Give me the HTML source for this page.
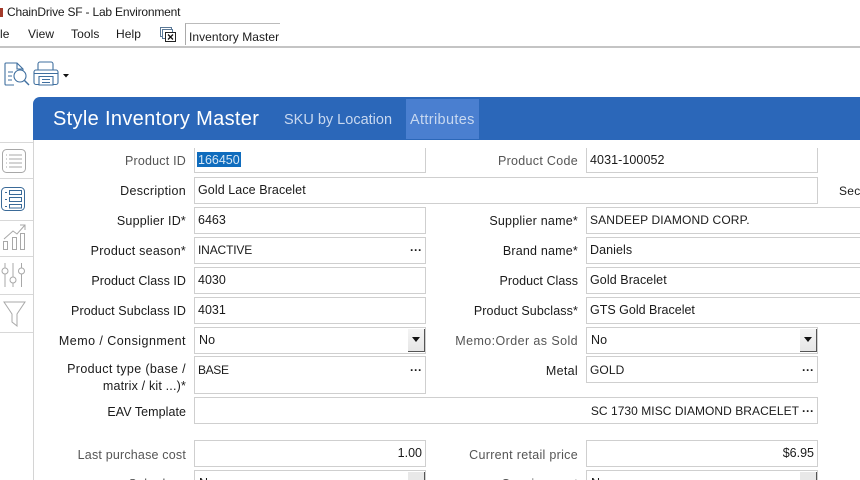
<!DOCTYPE html>
<html><head><meta charset="utf-8"><style>
html,body{margin:0;padding:0;background:#fff}
#r{position:relative;width:860px;height:480px;overflow:hidden;background:#fff;font-family:"Liberation Sans",sans-serif;font-size:12.5px;letter-spacing:.3px;color:#1a1a1a}
#r div{position:absolute;box-sizing:border-box}
.l{right:674px;text-align:right;white-space:nowrap;line-height:16px}
.l2{right:282px;text-align:right;white-space:nowrap;line-height:16px}
.g{color:#555}
.b{border:1px solid #cfcfcf;background:#fff;height:27px}
.t{white-space:nowrap;line-height:16px;letter-spacing:.08px}
.n{letter-spacing:0}
.k{font-size:12px}
.c1{left:194px;width:232px}.c2{left:586px;width:232px}.c3{left:586px;width:290px}
.d{font-weight:bold;letter-spacing:0;font-size:12px}
.m{white-space:nowrap;line-height:16px;font-size:12px;letter-spacing:.1px}
</style></head><body><div id="r">
<div style="left:0;top:8px;width:3px;height:9px;background:#a33a2a"></div>
<div class="m" style="left:7px;top:4px;font-size:12px;letter-spacing:-.2px">ChainDrive SF - Lab Environment</div>
<div class="m" style="left:0;top:26px">le</div>
<div class="m" style="left:28px;top:26px">View</div>
<div class="m" style="left:71px;top:26px">Tools</div>
<div class="m" style="left:116px;top:26px">Help</div>
<svg style="position:absolute;left:159px;top:26px" width="18" height="17" fill="#fff"><rect x="1.5" y="1.5" width="11" height="9" stroke="#5a7896"/><rect x="3.5" y="3.5" width="10" height="9" stroke="#5a7896"/><rect x="6.5" y="6.5" width="10" height="9" stroke="#222"/><path d="M9 8.5l5 5M14 8.5l-5 5" stroke="#111" stroke-width="1.3"/></svg>
<div style="left:185px;top:23px;width:95px;height:22px;border-left:1px solid #aaa;border-top:1px solid #bbb"></div>
<div class="m" style="left:189px;top:29px;letter-spacing:.05px">Inventory Master</div>
<div style="left:0;top:46px;width:860px;height:2px;background:#c4c4c4"></div>
<svg style="position:absolute;left:0;top:58px" width="72" height="30" fill="none" stroke="#3f6f9f" stroke-width="1.1"><path d="M14 27H6a1 1 0 0 1-1-1V6a1 1 0 0 1 1-1h11l6 6v2"/><path d="M17 5v6h6M8 14h5M8 18h4M8 22h4"/><circle cx="20" cy="18" r="6"/><path d="M24.500 22.500L29 27" stroke-width="1.4"/><path d="M38 12V6a2 2 0 0 1 2-2h11a2 2 0 0 1 2 2v6M39 26.500h-3a2 2 0 0 1-2-2V14a2 2 0 0 1 2-2h20a2 2 0 0 1 2 2v10.500a2 2 0 0 1-2 2h-3M39 18.500h14v8.500H39zM42 21.500h8M42 24.500h8M34 15.500h24"/><path d="M63 16h6l-3 3.500z" fill="#111" stroke="none"/></svg>
<div style="left:33px;top:97px;width:840px;height:43px;background:#2b67b9;border-radius:7px 0 0 0"></div>
<div style="left:406px;top:99px;width:73px;height:40px;background:#4a7fd0"></div>
<div style="left:53px;top:106px;color:#fff;font-size:20px;letter-spacing:.33px;line-height:26px;white-space:nowrap">Style Inventory Master</div>
<div style="left:284px;top:111px;color:#c8d8f0;font-size:14.5px;letter-spacing:0;line-height:18px;white-space:nowrap">SKU by Location</div>
<div style="left:410px;top:111px;color:#c8d8f0;font-size:14.5px;letter-spacing:.35px;line-height:18px;white-space:nowrap">Attributes</div>
<div style="left:33px;top:140px;width:1px;height:340px;background:#d4d4d4"></div>
<div style="left:0;top:142px;width:33px;height:1px;background:#d8d8d8"></div>
<div style="left:0;top:178px;width:33px;height:1px;background:#d8d8d8"></div>
<div style="left:0;top:220px;width:33px;height:1px;background:#d8d8d8"></div>
<div style="left:0;top:256px;width:33px;height:1px;background:#d8d8d8"></div>
<div style="left:0;top:294px;width:33px;height:1px;background:#d8d8d8"></div>
<div style="left:0;top:332px;width:33px;height:1px;background:#d8d8d8"></div>
<svg style="position:absolute;left:0;top:145px" width="33" height="190" fill="none" stroke="#a8a8a8" stroke-width="1"><rect x="2.500" y="4.500" width="23" height="23" rx="4"/><path d="M6 10h1M6 14h1M6 18h1M6 22h1M9 10h13M9 14h13M9 18h13M9 22h13"/>
<g stroke="#3a6a98"><rect x="1.500" y="42.500" width="23" height="23" rx="4"/><path d="M5 47.500h2M5 54.500h2M5 61.500h2"/><rect x="9.500" y="45.500" width="12" height="4"/><rect x="9.500" y="52.500" width="12" height="4"/><rect x="9.500" y="59.500" width="12" height="3.500"/></g>
<path d="M4 94l9-8 4 3 8-9M20 80h5v5"/><rect x="3.500" y="96.500" width="4" height="8"/><rect x="12.500" y="92.500" width="4" height="12"/><rect x="20.500" y="88.500" width="4" height="16"/>
<path d="M5 118v5M5 129v13M13 118v14M13 138v4M21.500 118v5M21.500 129v13"/><circle cx="5" cy="126" r="3"/><circle cx="13" cy="135" r="3"/><circle cx="21.500" cy="126" r="3"/>
<path d="M4 157h21l-8 12v12l-5-4v-8z"/></svg>

<div class="b c1" style="top:148px;height:25px;border-top:0"></div>
<div style="left:197px;top:152px;width:44px;height:15px;background:#0f6cbd"></div>
<div class="t n" style="left:198px;top:152px;color:#d5e6f5">166450</div>
<div class="b c2" style="top:148px;height:25px;border-top:0"></div>
<div class="t" style="left:590px;top:152px">4031-100052</div>
<div class="b" style="left:194px;top:177px;width:624px"></div>
<div class="t" style="left:198px;top:182px">Gold Lace Bracelet</div>
<div class="m" style="left:839px;top:183px;letter-spacing:.3px">Sec</div>

<div class="l g" style="top:153px;letter-spacing:.2px">Product ID</div>
<div class="l2 g" style="top:153px">Product Code</div>
<div class="l" style="top:183px">Description</div>
<div class="l" style="top:213px;letter-spacing:.2px">Supplier ID*</div>
<div class="l2" style="top:213px;letter-spacing:.23px">Supplier name*</div>
<div class="l" style="top:243px;letter-spacing:.24px">Product season*</div>
<div class="l2" style="top:243px;letter-spacing:.2px">Brand name*</div>
<div class="l" style="top:273px;letter-spacing:.05px">Product Class ID</div>
<div class="l2" style="top:273px;letter-spacing:.05px">Product Class</div>
<div class="l" style="top:303px;letter-spacing:.09px">Product Subclass ID</div>
<div class="l2" style="top:303px;letter-spacing:.12px">Product Subclass*</div>
<div class="l" style="top:333px;letter-spacing:.46px">Memo / Consignment</div>
<div class="l2 g" style="top:333px;letter-spacing:.41px">Memo:Order as Sold</div>
<div class="l" style="top:361px;letter-spacing:.35px">Product type (base /</div>
<div class="l" style="top:378px;letter-spacing:.18px">matrix / kit ...)*</div>
<div class="l2" style="top:363px">Metal</div>
<div class="l" style="top:404px;letter-spacing:.05px">EAV Template</div>
<div class="l g" style="top:447px;letter-spacing:.19px">Last purchase cost</div>
<div class="l2 g" style="top:447px">Current retail price</div>

<div class="b c1" style="top:207px"></div><div class="t n" style="left:198px;top:212px">6463</div>
<div class="b c3" style="top:207px"></div><div class="t k" style="left:590px;top:212px;letter-spacing:.13px">SANDEEP DIAMOND CORP.</div>
<div class="b c1" style="top:237px"></div><div class="t k" style="left:198px;top:242px;letter-spacing:-.15px">INACTIVE</div><div class="d" style="left:410px;top:242px;line-height:16px">···</div>
<div class="b c3" style="top:237px"></div><div class="t" style="left:590px;top:242px">Daniels</div>
<div class="b c1" style="top:267px"></div><div class="t n" style="left:198px;top:272px">4030</div>
<div class="b c3" style="top:267px"></div><div class="t" style="left:590px;top:272px">Gold Bracelet</div>
<div class="b c1" style="top:297px"></div><div class="t n" style="left:198px;top:302px">4031</div>
<div class="b c3" style="top:297px"></div><div class="t n" style="left:590px;top:302px">GTS Gold Bracelet</div>

<div class="b c1" style="top:327px"></div><div class="t" style="left:199px;top:332px">No</div>
<div style="left:408px;top:329px;width:17px;height:23px;background:linear-gradient(#f4f4f4,#e6e6e6);border-right:1px solid #555;border-bottom:1px solid #555"></div>
<svg style="position:absolute;left:412px;top:337px" width="9" height="6"><path d="M0 0h8l-4 5z" fill="#111"/></svg>
<div class="b c2" style="top:327px"></div><div class="t" style="left:591px;top:332px">No</div>
<div style="left:800px;top:329px;width:17px;height:23px;background:linear-gradient(#f4f4f4,#e6e6e6);border-right:1px solid #555;border-bottom:1px solid #555"></div>
<svg style="position:absolute;left:804px;top:337px" width="9" height="6"><path d="M0 0h8l-4 5z" fill="#111"/></svg>

<div class="b c1" style="top:356px;height:38px"></div><div class="t k" style="left:198px;top:362px;letter-spacing:-.35px">BASE</div><div class="d" style="left:410px;top:362px;line-height:16px">···</div>
<div class="b c2" style="top:356px"></div><div class="t k" style="left:590px;top:362px;letter-spacing:.1px">GOLD</div><div class="d" style="left:802px;top:362px;line-height:16px">···</div>
<div class="b" style="left:194px;top:397px;width:624px"></div>
<div class="t k" style="right:61px;top:403px;letter-spacing:.05px">SC 1730 MISC DIAMOND BRACELET</div><div class="d" style="left:802px;top:403px;line-height:16px">···</div>

<div class="b c1" style="top:440px"></div><div class="t n" style="right:438px;top:445px">1.00</div>
<div class="b c2" style="top:440px"></div><div class="t n" style="right:46px;top:445px">$6.95</div>
<div class="b c1" style="top:470px;height:20px"></div><div class="t" style="left:199px;top:475px">No</div>
<div style="left:408px;top:472px;width:17px;height:10px;background:#e8e8e8;border-right:1px solid #555"></div>
<div class="b c2" style="top:470px;height:20px"></div><div class="t" style="left:591px;top:475px">No</div>
<div style="left:800px;top:472px;width:17px;height:10px;background:#e8e8e8;border-right:1px solid #555"></div>
<div class="l g" style="top:476px">Sub-class</div>
<div class="l2 g" style="top:476px">Consignment</div>
</div></body></html>
